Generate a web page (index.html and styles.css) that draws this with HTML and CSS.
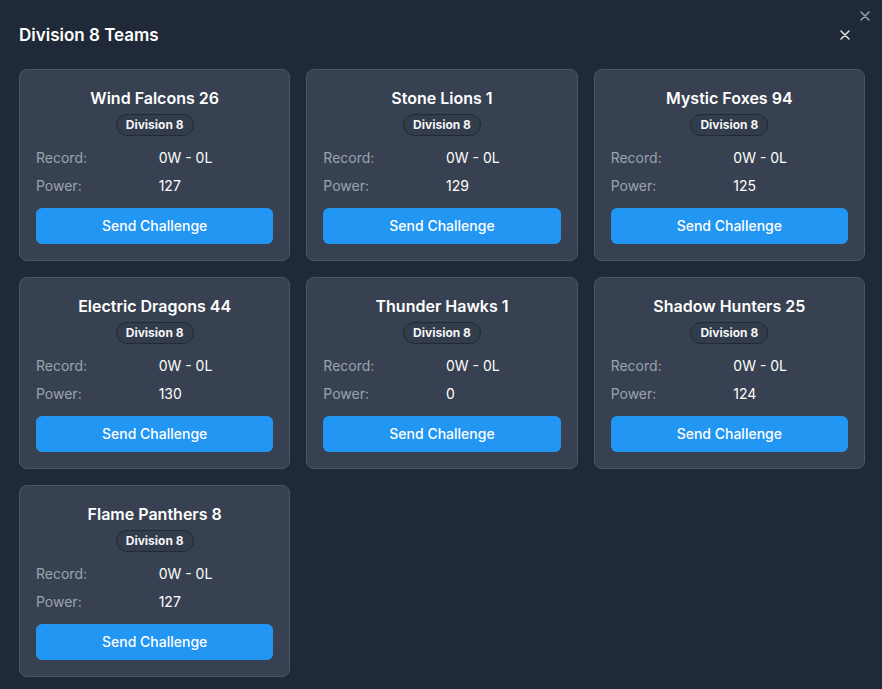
FILE: index.html
```html
<!DOCTYPE html>
<html>
<head>
<meta charset="utf-8">
<link rel="stylesheet" href="styles.css">
</head>
<body>
<div class="modal">
  <button class="corner-close" aria-label="Close">
    <svg width="10" height="10" viewBox="0 0 10 10"><path d="M1 1L9 9M9 1L1 9" stroke="#9ca3af" stroke-width="1.5" stroke-linecap="round"/></svg>
  </button>
  <div class="header">
    <h2 class="title">Division 8 Teams</h2>
    <button class="close" aria-label="Close">
      <svg width="10" height="10" viewBox="0 0 10 10"><path d="M1 1L9 9M9 1L1 9" stroke="#e5e7eb" stroke-width="1.5" stroke-linecap="round"/></svg>
    </button>
  </div>
  <div class="grid">
    <div class="card">
      <div class="name">Wind Falcons 26</div>
      <span class="badge">Division 8</span>
      <div class="stats"><span class="label">Record:</span><span class="value">0W - 0L</span><span class="label">Power:</span><span class="value">127</span></div>
      <button class="btn">Send Challenge</button>
    </div>
    <div class="card">
      <div class="name">Stone Lions 1</div>
      <span class="badge">Division 8</span>
      <div class="stats"><span class="label">Record:</span><span class="value">0W - 0L</span><span class="label">Power:</span><span class="value">129</span></div>
      <button class="btn">Send Challenge</button>
    </div>
    <div class="card">
      <div class="name">Mystic Foxes 94</div>
      <span class="badge">Division 8</span>
      <div class="stats"><span class="label">Record:</span><span class="value">0W - 0L</span><span class="label">Power:</span><span class="value">125</span></div>
      <button class="btn">Send Challenge</button>
    </div>
    <div class="card">
      <div class="name">Electric Dragons 44</div>
      <span class="badge">Division 8</span>
      <div class="stats"><span class="label">Record:</span><span class="value">0W - 0L</span><span class="label">Power:</span><span class="value">130</span></div>
      <button class="btn">Send Challenge</button>
    </div>
    <div class="card">
      <div class="name">Thunder Hawks 1</div>
      <span class="badge">Division 8</span>
      <div class="stats"><span class="label">Record:</span><span class="value">0W - 0L</span><span class="label">Power:</span><span class="value">0</span></div>
      <button class="btn">Send Challenge</button>
    </div>
    <div class="card">
      <div class="name">Shadow Hunters 25</div>
      <span class="badge">Division 8</span>
      <div class="stats"><span class="label">Record:</span><span class="value">0W - 0L</span><span class="label">Power:</span><span class="value">124</span></div>
      <button class="btn">Send Challenge</button>
    </div>
    <div class="card">
      <div class="name">Flame Panthers 8</div>
      <span class="badge">Division 8</span>
      <div class="stats"><span class="label">Record:</span><span class="value">0W - 0L</span><span class="label">Power:</span><span class="value">127</span></div>
      <button class="btn">Send Challenge</button>
    </div>
  </div>
</div>
</body>
</html>
```

FILE: styles.css
```css
html, body {
  margin: 0;
  padding: 0;
  background: #1f2937;
  height: 100%;
}
body {
  font-family: Inter, "Noto Sans", sans-serif;
  color: #fff;
}
.modal {
  position: relative;
  box-sizing: border-box;
  width: 882px;
  height: 689px;
  padding: 20px 17px 0 19px;
  background: #1f2937;
}
.corner-close {
  position: absolute;
  top: 11px;
  right: 12px;
  width: 10px;
  height: 10px;
  padding: 0;
  border: 0;
  background: none;
  display: flex;
}
.header {
  display: flex;
  align-items: center;
  justify-content: space-between;
  height: 30px;
  margin-bottom: 19px;
}
.title {
  margin: 0;
  font-size: 17px;
  font-weight: 600;
  line-height: 28px;
  color: #fff;
}
.close {
  border: 0;
  background: none;
  padding: 0;
  margin-right: 15px;
  width: 10px;
  height: 10px;
  display: flex;
}
.grid {
  display: grid;
  grid-template-columns: repeat(3, 1fr);
  gap: 16px;
}
.card {
  box-sizing: border-box;
  height: 192px;
  background: #374151;
  border: 1px solid #4b5563;
  border-radius: 8px;
  padding: 16px;
  display: flex;
  flex-direction: column;
  align-items: center;
}
.name {
  font-size: 16px;
  font-weight: 600;
  line-height: 24px;
  color: #fff;
}
.badge {
  margin-top: 4px;
  font-size: 12px;
  font-weight: 700;
  line-height: 16px;
  padding: 2px 9px;
  border-radius: 999px;
  background: #323c4b;
  border: 1px solid #1f2937;
  color: #f3f4f6;
}
.stats {
  align-self: stretch;
  display: grid;
  grid-template-columns: 1fr 1fr;
  column-gap: 8px;
  row-gap: 8px;
  margin-top: 12px;
  font-size: 14px;
  line-height: 20px;
}
.label {
  color: #9ca3af;
}
.value {
  color: #fff;
}
.btn {
  align-self: stretch;
  margin-top: 12px;
  height: 36px;
  padding: 0 0 2px;
  border: 0;
  border-radius: 6px;
  background: #2196f3;
  color: #fff;
  font-family: Inter, "Noto Sans", sans-serif;
  font-size: 14px;
  font-weight: 500;
}
```
